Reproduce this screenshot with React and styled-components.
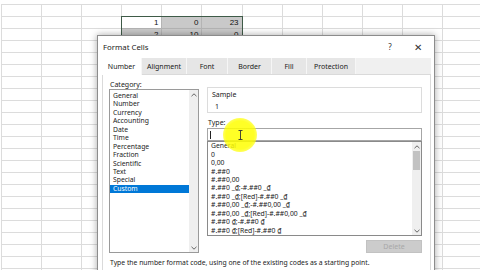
import React from "react";
import styled, { createGlobalStyle } from "styled-components";

const GlobalStyle = createGlobalStyle`
  html, body {
    margin: 0;
    padding: 0;
    background: #fff;
  }
  body {
    font-family: "Noto Sans", "Open Sans", sans-serif;
  }
`;

const Screen = styled.div`
  position: relative;
  width: 480px;
  height: 270px;
  overflow: hidden;
  background: #fff;
`;

const Sheet = styled.div`
  display: grid;
  grid-template-columns: repeat(12, 40.1px);
  grid-auto-rows: 12px;
  margin: 4px 0 0 1px;
  border-top: 1px solid #dcdcdc;
  border-left: 1px solid #dcdcdc;
`;

const Cell = styled.div`
  grid-column: ${(p) => p.$col};
  grid-row: ${(p) => p.$row};
  border-right: 1px solid #dcdcdc;
  border-bottom: 1px solid #dcdcdc;
  background: ${(p) => (p.$selected ? (p.$active ? "#fff" : "#c9c9c9") : "#fff")};
  border-color: ${(p) => (p.$selected ? "#b4b4b4" : "#dcdcdc")};
  font-family: "Liberation Sans", Arial, sans-serif;
  font-size: 8px;
  line-height: 11px;
  text-align: right;
  padding-right: 3px;
  color: #111;
`;

const SelectionFrame = styled.div`
  grid-column: 4 / 7;
  grid-row: 2 / 12;
  border: 1.5px solid #3f5b48;
  margin: -1px 0 0 -1px;
  pointer-events: none;
`;

const Dialog = styled.div`
  position: absolute;
  left: 97px;
  top: 35px;
  width: 336px;
  height: 250px;
  background: #fff;
  border: 1px solid #8c8c8c;
  box-shadow: 0 0 7px rgba(0, 0, 0, 0.35);
  display: flex;
  flex-direction: column;
  color: #1a1a1a;
  font-size: 7px;
`;

const TitleBar = styled.div`
  display: flex;
  align-items: center;
  height: 21px;
  padding: 0 6px 0 5px;
  font-size: 7.8px;
  color: #222;
`;

const Title = styled.span`
  flex: 1;
`;

const TitleButton = styled.span`
  width: 20px;
  text-align: center;
  font-size: ${(p) => p.$size || "8px"};
  color: #333;
  margin-left: 8px;
`;

const Tabs = styled.div`
  display: flex;
  height: 16px;
  margin: 1px 3px 0 4px;
  background: #f0f0f0;
  border-bottom: 1px solid #dadada;
`;

const Tab = styled.div`
  width: ${(p) => p.$w}px;
  display: flex;
  align-items: center;
  justify-content: center;
  background: ${(p) => (p.$active ? "#fff" : "#e6e6e6")};
  border-right: 1px solid #f6f6f6;
  font-size: 7px;
  color: #1a1a1a;
  margin-bottom: ${(p) => (p.$active ? "-1px" : "0")};
`;

const Panel = styled.div`
  flex: 1;
  margin: 0 3px 0 4px;
  border-left: 1px solid #dadada;
  border-right: 1px solid #dadada;
  padding: 5px 8px 0 6px;
  display: flex;
  flex-direction: column;
`;

const Columns = styled.div`
  display: flex;
  gap: 8px;
  height: 173px;
`;

const LeftCol = styled.div`
  width: 90px;
  display: flex;
  flex-direction: column;
`;

const RightCol = styled.div`
  flex: 1;
  display: flex;
  flex-direction: column;
  padding-top: 7px;
`;

const Label = styled.div`
  font-size: 7px;
  line-height: 9px;
  height: 9px;
  padding-left: 1px;
`;

const ListBox = styled.div`
  display: flex;
  height: ${(p) => p.$h}px;
  border: 1px solid ${(p) => p.$border || "#9a9a9a"};
  background: #fff;
`;

const Items = styled.div`
  flex: 1;
  padding-top: ${(p) => p.$pt || 0}px;
  overflow: hidden;
`;

const Item = styled.div`
  height: 8.45px;
  line-height: 8.45px;
  font-size: 6.8px;
  padding-left: 3px;
  white-space: nowrap;
  background: ${(p) => (p.$selected ? "#0078d7" : "transparent")};
  color: ${(p) => (p.$selected ? "#fff" : "#1a1a1a")};
`;

const ScrollBar = styled.div`
  width: 9px;
  background: #efefef;
  display: flex;
  flex-direction: column;
  align-items: center;
`;

const Arrow = styled.div`
  height: 9px;
  display: flex;
  align-items: center;
  justify-content: center;
`;

const Thumb = styled.div`
  width: 7px;
  height: 19px;
  background: #c2c2c2;
`;

const Track = styled.div`
  flex: 1;
`;

const SampleBox = styled.div`
  height: 26px;
  border: 1px solid #dcdcdc;
  padding: 0 3px;
  display: flex;
  flex-direction: column;
  justify-content: center;
  gap: 4px;
  margin-bottom: 5px;
`;

const SampleValue = styled.div`
  padding-left: 4px;
  font-size: 7px;
  line-height: 8px;
`;

const TypeInput = styled.div`
  height: 12px;
  border: 1px solid #a6a6a6;
  margin-top: 1px;
  display: flex;
  align-items: center;
  padding-left: 2px;
`;

const Caret = styled.div`
  width: 1px;
  height: 8px;
  background: #222;
`;

const ButtonRow = styled.div`
  display: flex;
  justify-content: flex-end;
  margin-top: 4px;
`;

const DisabledButton = styled.div`
  width: 56px;
  height: 13px;
  background: #cccccc;
  border: 1px solid #c2c2c2;
  box-sizing: border-box;
  color: #a8a8a8;
  font-size: 7px;
  display: flex;
  align-items: center;
  justify-content: center;
`;

const Hint = styled.div`
  margin-top: 5px;
  font-size: 6.8px;
  line-height: 9px;
  white-space: nowrap;
  padding-left: 1px;
`;

const Highlight = styled.div`
  position: absolute;
  left: 223px;
  top: 118px;
  width: 34px;
  height: 34px;
  border-radius: 50%;
  background: radial-gradient(circle, rgba(255, 255, 0, 0.85) 58%, rgba(255, 255, 30, 0.55) 80%, rgba(255, 255, 60, 0) 100%);
  display: flex;
  align-items: center;
  justify-content: center;
  pointer-events: none;
`;

const Chevron = ({ down }) => (
  <svg width="6" height="4" viewBox="0 0 6 4">
    <path
      d={down ? "M0.5 0.8 L3 3.2 L5.5 0.8" : "M0.5 3.2 L3 0.8 L5.5 3.2"}
      fill="none"
      stroke="#555"
      strokeWidth="0.9"
    />
  </svg>
);

const IBeam = () => (
  <svg width="5" height="10" viewBox="0 0 5 10">
    <path d="M0.5 0.5 H4.5 M2.5 0.5 V9.5 M0.5 9.5 H4.5" stroke="#333" strokeWidth="0.9" fill="none" />
  </svg>
);

const categories = [
  "General",
  "Number",
  "Currency",
  "Accounting",
  "Date",
  "Time",
  "Percentage",
  "Fraction",
  "Scientific",
  "Text",
  "Special",
  "Custom",
];

const formats = [
  "General",
  "0",
  "0,00",
  "#.##0",
  "#.##0,00",
  "#.##0 _₫;-#.##0 _₫",
  "#.##0 _₫;[Red]-#.##0 _₫",
  "#.##0,00 _₫;-#.##0,00 _₫",
  "#.##0,00 _₫;[Red]-#.##0,00 _₫",
  "#.##0 ₫;-#.##0 ₫",
  "#.##0 ₫;[Red]-#.##0 ₫",
];

const tabs = [
  ["Number", 39, true],
  ["Alignment", 44],
  ["Font", 40],
  ["Border", 43],
  ["Fill", 34],
  ["Protection", 48],
];

const sheetValues = {
  "2-4": "1",
  "2-5": "0",
  "2-6": "23",
  "3-4": "2",
  "3-5": "10",
  "3-6": "0",
};

const SheetGrid = () => {
  const cells = [];
  for (let r = 1; r <= 23; r++) {
    for (let c = 1; c <= 12; c++) {
      const selected = c >= 4 && c <= 6 && r >= 2 && r <= 11;
      cells.push(
        <Cell
          key={`${r}-${c}`}
          $row={r}
          $col={c}
          $selected={selected}
          $active={r === 2 && c === 4}
        >
          {sheetValues[`${r}-${c}`]}
        </Cell>
      );
    }
  }
  return (
    <Sheet>
      {cells}
      <SelectionFrame />
    </Sheet>
  );
};

const App = () => {
  return (
    <>
      <GlobalStyle />
      <Screen>
        <SheetGrid />
        <Dialog>
          <TitleBar>
            <Title>Format Cells</Title>
            <TitleButton>?</TitleButton>
            <TitleButton $size="10px">✕</TitleButton>
          </TitleBar>
          <Tabs>
            {tabs.map(([name, w, active]) => (
              <Tab key={name} $w={w} $active={active}>
                {name}
              </Tab>
            ))}
          </Tabs>
          <Panel>
            <Columns>
              <LeftCol>
                <Label>Category:</Label>
                <ListBox $h={164}>
                  <Items $pt={2}>
                    {categories.map((c) => (
                      <Item key={c} $selected={c === "Custom"}>
                        {c}
                      </Item>
                    ))}
                  </Items>
                  <ScrollBar>
                    <Arrow>
                      <Chevron />
                    </Arrow>
                    <Track />
                    <Arrow>
                      <Chevron down />
                    </Arrow>
                  </ScrollBar>
                </ListBox>
              </LeftCol>
              <RightCol>
                <SampleBox>
                  <Label>Sample</Label>
                  <SampleValue>1</SampleValue>
                </SampleBox>
                <Label>Type:</Label>
                <TypeInput>
                  <Caret />
                </TypeInput>
                <ListBox $h={94} $border="#8a8a8a">
                  <Items>
                    {formats.map((f) => (
                      <Item key={f}>{f}</Item>
                    ))}
                  </Items>
                  <ScrollBar>
                    <Arrow>
                      <Chevron />
                    </Arrow>
                    <Thumb />
                    <Track />
                    <Arrow>
                      <Chevron down />
                    </Arrow>
                  </ScrollBar>
                </ListBox>
                <ButtonRow>
                  <DisabledButton>Delete</DisabledButton>
                </ButtonRow>
              </RightCol>
            </Columns>
            <Hint>
              Type the number format code, using one of the existing codes as a starting point.
            </Hint>
          </Panel>
        </Dialog>
        <Highlight>
          <IBeam />
        </Highlight>
      </Screen>
    </>
  );
};

export default App;
